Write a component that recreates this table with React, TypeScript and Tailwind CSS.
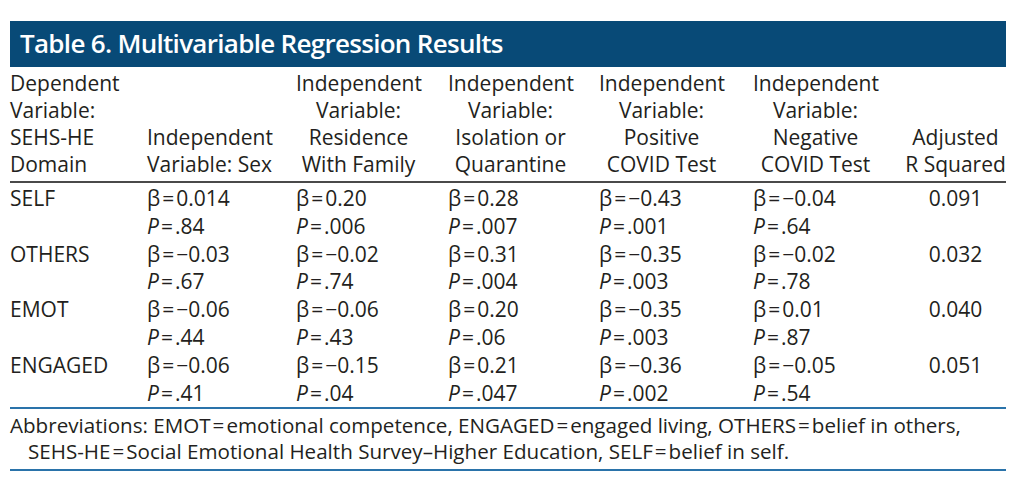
import React from "react";

const Eq = () => <span className="mx-[2px]">=</span>;

type Cell = [string, string];
type Row = { name: string; cells: Cell[]; r2: string };

const rows: Row[] = [
  {
    name: "SELF",
    cells: [
      ["0.014", ".84"],
      ["0.20", ".006"],
      ["0.28", ".007"],
      ["\u22120.43", ".001"],
      ["\u22120.04", ".64"],
    ],
    r2: "0.091",
  },
  {
    name: "OTHERS",
    cells: [
      ["\u22120.03", ".67"],
      ["\u22120.02", ".74"],
      ["0.31", ".004"],
      ["\u22120.35", ".003"],
      ["\u22120.02", ".78"],
    ],
    r2: "0.032",
  },
  {
    name: "EMOT",
    cells: [
      ["\u22120.06", ".44"],
      ["\u22120.06", ".43"],
      ["0.20", ".06"],
      ["\u22120.35", ".003"],
      ["0.01", ".87"],
    ],
    r2: "0.040",
  },
  {
    name: "ENGAGED",
    cells: [
      ["\u22120.06", ".41"],
      ["\u22120.15", ".04"],
      ["0.21", ".047"],
      ["\u22120.36", ".002"],
      ["\u22120.05", ".54"],
    ],
    r2: "0.051",
  },
];

const cols = "grid grid-cols-[137px_149px_152px_151px_154px_152px_101px]";

const headers: string[][] = [
  ["Independent", "Variable: Sex"],
  ["Independent", "Variable:", "Residence", "With Family"],
  ["Independent", "Variable:", "Isolation or", "Quarantine"],
  ["Independent", "Variable:", "Positive", "COVID Test"],
  ["Independent", "Variable:", "Negative", "COVID Test"],
];

export default function App() {
  return (
    <div className="w-[1024px] h-[487px] bg-white overflow-hidden font-['Open_Sans',sans-serif] text-[#231f20]">
      <div className="ml-[10px] w-[996px] pt-[21px]">
        <div className="h-[46px] bg-[#084a77] flex items-center pl-[10px] pb-[2px]">
          <span className="text-white font-semibold text-[26px] tracking-[-0.7px]">
            Table 6. Multivariable Regression Results
          </span>
        </div>

        <div className={`${cols} mt-[3px] text-[21px] leading-[27px]`}>
          <div className="flex flex-col justify-end">
            <div>Dependent</div>
            <div>Variable:</div>
            <div>SEHS-HE</div>
            <div>Domain</div>
          </div>
          {headers.map((h, i) => (
            <div key={i} className="flex flex-col justify-end">
              <div className="w-[125px] text-center">
                {h.map((l, j) => (
                  <div key={j} className="whitespace-nowrap">
                    {l}
                  </div>
                ))}
              </div>
            </div>
          ))}
          <div className="flex flex-col justify-end text-center">
            <div>Adjusted</div>
            <div>R Squared</div>
          </div>
        </div>

        <div className="mt-[3px] h-[2px] bg-[#4a4a4a]" />

        <div className="mt-[2px] text-[21px] leading-[27.8px]">
          {rows.map((r) => (
            <div key={r.name} className={cols}>
              <div>{r.name}</div>
              {r.cells.map((c, i) => (
                <div key={i} className="whitespace-nowrap">
                  <div>
                    β<Eq />
                    {c[0]}
                  </div>
                  <div>
                    <span className="italic">P</span>
                    <Eq />
                    {c[1]}
                  </div>
                </div>
              ))}
              <div className="text-center">{r.r2}</div>
            </div>
          ))}
        </div>

        <div className="h-[2px] bg-[#2a73aa]" />

        <div className="mt-[3px] text-[20.6px] leading-[26px] whitespace-nowrap">
          <div>
            Abbreviations: EMOT<Eq />emotional competence, ENGAGED<Eq />engaged living, OTHERS
            <Eq />belief in others,
          </div>
          <div className="pl-[18px]">
            SEHS-HE<Eq />Social Emotional Health Survey–Higher Education, SELF<Eq />belief in self.
          </div>
        </div>

        <div className="mt-[5px] h-[2px] bg-[#2a73aa]" />
      </div>
    </div>
  );
}
